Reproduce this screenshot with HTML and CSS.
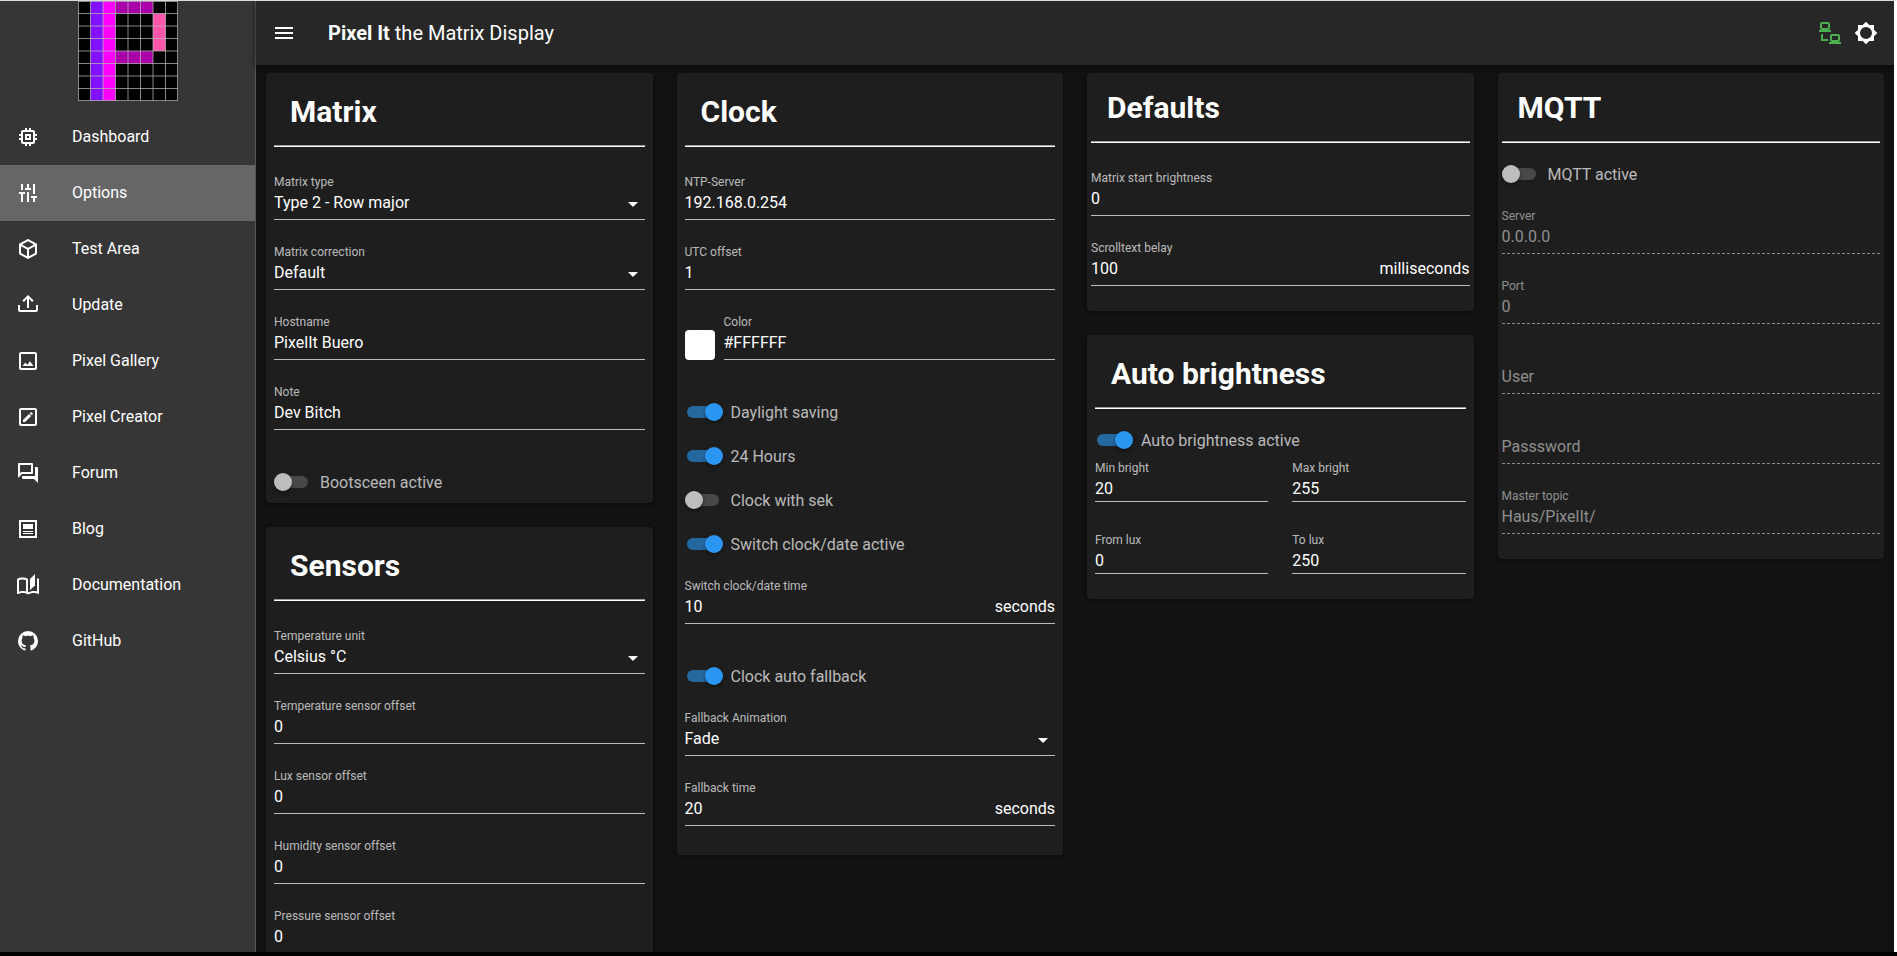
FILE: index.html
```
<!DOCTYPE html>
<html lang="en">
<head>
<meta charset="utf-8">
<meta name="viewport" content="width=device-width, initial-scale=1">
<title>Pixel It the Matrix Display</title>
<link rel="stylesheet" href="styles.css">
</head>
<body>
<div class="app">
  <aside class="sidebar">
    <svg class="logo" viewBox="0 0 100 100" role="img" aria-label="Pixel It">
      <rect width="100" height="100" fill="#000"/>
      <rect x="12.5" width="12.5" height="100" fill="#8010ff"/>
      <rect x="25" width="12.5" height="100" fill="#ff00ff"/>
      <rect x="37.5" width="37.5" height="12.5" fill="#aa00aa"/>
      <rect x="37.5" y="50" width="37.5" height="12.5" fill="#aa00aa"/>
      <rect x="75" y="12.5" width="12.5" height="37.5" fill="#ff55aa"/>
      <path d="M.5 0V100M12.5 0V100M25 0V100M37.5 0V100M50 0V100M62.5 0V100M75 0V100M87.5 0V100M99.5 0V100M0 .5H100M0 12.5H100M0 25H100M0 37.5H100M0 50H100M0 62.5H100M0 75H100M0 87.5H100M0 99.5H100" stroke="#b4b4b4" stroke-opacity=".75" fill="none"/>
    </svg>
    <nav class="nav">
      <a class="nav-item" href="#dashboard"><svg class="icon" viewBox="0 0 24 24"><path d="M17,17H7V7H17M21,11V9H19V7C19,5.89 18.1,5 17,5H15V3H13V5H11V3H9V5H7C5.89,5 5,5.89 5,7V9H3V11H5V13H3V15H5V17A2,2 0 0,0 7,19H9V21H11V19H13V21H15V19H17A2,2 0 0,0 19,17V15H21V13H19V11M13,13H11V11H13M15,9H9V15H15V9Z"/></svg>Dashboard</a>
      <a class="nav-item nav-item--active" href="#options" aria-current="page"><svg class="icon" viewBox="0 0 24 24"><path d="M5,3H7V9H5ZM3,11H9V13H7V21H5V13H3ZM11,3H13V7H15V9H9V7H11ZM11,11H13V21H11ZM17,3H19V13H17ZM15,15H21V17H19V21H17V17H15Z"/></svg>Options</a>
      <a class="nav-item" href="#test"><svg class="icon" viewBox="0 0 24 24"><path d="M21,16.5C21,16.88 20.79,17.21 20.47,17.38L12.57,21.82C12.41,21.94 12.21,22 12,22C11.79,22 11.59,21.94 11.43,21.82L3.53,17.38C3.21,17.21 3,16.88 3,16.5V7.5C3,7.12 3.21,6.79 3.53,6.62L11.43,2.18C11.59,2.06 11.79,2 12,2C12.21,2 12.41,2.06 12.57,2.18L20.47,6.62C20.79,6.79 21,7.12 21,7.5V16.5M12,4.15L6.04,7.5L12,10.85L17.96,7.5L12,4.15M5,15.91L11,19.29V12.58L5,9.21V15.91M19,15.91V9.21L13,12.58V19.29L19,15.91Z"/></svg>Test Area</a>
      <a class="nav-item" href="#update"><svg class="icon" viewBox="0 0 24 24"><path d="M2 12H4V17H20V12H22V17C22 18.11 21.11 19 20 19H4C2.9 19 2 18.11 2 17V12M12 2L6.46 7.46L7.88 8.88L11 5.75V15H13V5.75L16.13 8.88L17.55 7.45L12 2Z"/></svg>Update</a>
      <a class="nav-item" href="#gallery"><svg class="icon" viewBox="0 0 24 24"><path d="M19,19H5V5H19M19,3H5A2,2 0 0,0 3,5V19A2,2 0 0,0 5,21H19A2,2 0 0,0 21,19V5A2,2 0 0,0 19,3M13.96,12.29L11.21,15.83L9.25,13.47L6.5,17H17.5L13.96,12.29Z"/></svg>Pixel Gallery</a>
      <a class="nav-item" href="#creator"><svg class="icon" viewBox="0 0 24 24"><path d="M19,19V5H5V19H19M19,3A2,2 0 0,1 21,5V19A2,2 0 0,1 19,21H5A2,2 0 0,1 3,19V5C3,3.89 3.9,3 5,3H19M16.7,9.35L15.7,10.35L13.65,8.3L14.65,7.3C14.86,7.08 15.21,7.08 15.42,7.3L16.7,8.58C16.92,8.79 16.92,9.14 16.7,9.35M7,14.94L13.06,8.88L15.12,10.94L9.06,17H7V14.94Z"/></svg>Pixel Creator</a>
      <a class="nav-item" href="#forum"><svg class="icon" viewBox="0 0 24 24"><path d="M15,4V11H5.17L4,12.17V4H15M16,2H3A1,1 0 0,0 2,3V17L6,13H16A1,1 0 0,0 17,12V3A1,1 0 0,0 16,2M21,6H19V15H6V17A1,1 0 0,0 7,18H18L22,22V7A1,1 0 0,0 21,6Z"/></svg>Forum</a>
      <a class="nav-item" href="#blog"><svg class="icon" viewBox="0 0 24 24"><path d="M19 5V19H5V5H19M21 3H3V21H21V3M17 17H7V16H17V17M17 15H7V14H17V15M17 12H7V7H17V12Z"/></svg>Blog</a>
      <a class="nav-item" href="#docs"><svg class="icon" viewBox="0 0 24 24"><path d="M19 1L14 6V17L19 12.5V1M21 5V18.5C19.9 18.15 18.7 18 17.5 18C15.8 18 13.35 18.65 12 19.5V6C10.55 4.9 8.45 4.5 6.5 4.5C4.55 4.5 2.45 4.9 1 6V20.65C1 20.9 1.25 21.15 1.5 21.15C1.6 21.15 1.65 21.1 1.75 21.1C3.1 20.45 5.05 20 6.5 20C8.45 20 10.55 20.4 12 21.5C13.35 20.65 15.8 20 17.5 20C19.15 20 20.85 20.3 22.25 21.05C22.35 21.1 22.4 21.1 22.5 21.1C22.75 21.1 23 20.85 23 20.6V6C22.4 5.55 21.75 5.25 21 5M10 18.41C8.75 18.09 7.5 18 6.5 18C5.44 18 4.18 18.19 3 18.5V7.13C3.91 6.73 5.14 6.5 6.5 6.5C7.86 6.5 9.09 6.73 10 7.13V18.41Z"/></svg>Documentation</a>
      <a class="nav-item" href="#github"><svg class="icon" viewBox="0 0 24 24"><path d="M12,2A10,10 0 0,0 2,12C2,16.42 4.87,20.17 8.84,21.5C9.34,21.58 9.5,21.27 9.5,21C9.5,20.77 9.5,20.14 9.5,19.31C6.73,19.91 6.14,17.97 6.14,17.97C5.68,16.81 5.03,16.5 5.03,16.5C4.12,15.88 5.1,15.9 5.1,15.9C6.1,15.97 6.63,16.93 6.63,16.93C7.5,18.45 8.97,18 9.54,17.76C9.63,17.11 9.89,16.67 10.17,16.42C7.95,16.17 5.62,15.31 5.62,11.5C5.62,10.39 6,9.5 6.65,8.79C6.55,8.54 6.2,7.5 6.75,6.15C6.75,6.15 7.59,5.88 9.5,7.17C10.29,6.95 11.15,6.84 12,6.84C12.85,6.84 13.71,6.95 14.5,7.17C16.41,5.88 17.25,6.15 17.25,6.15C17.8,7.5 17.45,8.54 17.35,8.79C18,9.5 18.38,10.39 18.38,11.5C18.38,15.32 16.04,16.16 13.81,16.41C14.17,16.72 14.5,17.33 14.5,18.26C14.5,19.6 14.5,20.68 14.5,21C14.5,21.27 14.66,21.59 15.17,21.5C19.14,20.16 22,16.42 22,12A10,10 0 0,0 12,2Z"/></svg>GitHub</a>
    </nav>
  </aside>

  <div class="page">
    <header class="topbar">
      <button class="icon-button" type="button" aria-label="Menu"><svg class="icon" viewBox="0 0 24 24"><path d="M3,6H21V8H3V6M3,11H21V13H3V11M3,16H21V18H3V16Z"/></svg></button>
      <h1 class="topbar-title"><b>Pixel It</b> the Matrix Display</h1>
      <svg class="icon icon--online" viewBox="0 0 24 24" role="img" aria-label="Connected"><path d="M4,1C2.89,1 2,1.89 2,3V7C2,8.11 2.89,9 4,9H1V11H13V9H10C11.11,9 12,8.11 12,7V3C12,1.89 11.11,1 10,1H4M4,3H10V7H4V3M3,13V18L3,20H10V18H5V13H3M14,13C12.89,13 12,13.89 12,15V19C12,20.11 12.89,21 14,21H11V23H23V21H20C21.11,21 22,20.11 22,19V15C22,13.89 21.11,13 20,13H14M14,15H20V19H14V15Z"/></svg>
      <button class="icon-button" type="button" aria-label="Toggle theme"><svg class="icon" viewBox="0 0 24 24"><path d="M12,18A6,6 0 0,1 6,12A6,6 0 0,1 12,6A6,6 0 0,1 18,12A6,6 0 0,1 12,18M20,15.31L23.31,12L20,8.69V4H15.31L12,0.69L8.69,4H4V8.69L0.69,12L4,15.31V20H8.69L12,23.31L15.31,20H20V15.31Z"/></svg></button>
    </header>

    <main class="columns">
      <div class="column">
        <section class="card">
          <h2 class="card-title">Matrix</h2>
          <hr class="rule">
          <div class="fields">
            <div class="field"><label for="mtype">Matrix type</label><select id="mtype"><option>Type 2 - Row major</option></select><svg class="caret" viewBox="0 0 24 24"><path d="M7,10L12,15L17,10H7Z"/></svg></div>
            <div class="field"><label for="mcorr">Matrix correction</label><select id="mcorr"><option>Default</option></select><svg class="caret" viewBox="0 0 24 24"><path d="M7,10L12,15L17,10H7Z"/></svg></div>
            <div class="field"><label for="host">Hostname</label><input id="host" type="text" value="PixelIt Buero"></div>
            <div class="field"><label for="note">Note</label><input id="note" type="text" value="Dev Bitch"></div>
          </div>
          <div class="switches switches--spaced"><label class="switch"><input type="checkbox" role="switch"><span>Bootsceen active</span></label></div>
        </section>

        <section class="card">
          <h2 class="card-title">Sensors</h2>
          <hr class="rule">
          <div class="fields">
            <div class="field"><label for="tunit">Temperature unit</label><select id="tunit"><option>Celsius °C</option></select><svg class="caret" viewBox="0 0 24 24"><path d="M7,10L12,15L17,10H7Z"/></svg></div>
            <div class="field"><label for="toff">Temperature sensor offset</label><input id="toff" type="text" inputmode="decimal" value="0"></div>
            <div class="field"><label for="loff">Lux sensor offset</label><input id="loff" type="text" inputmode="decimal" value="0"></div>
            <div class="field"><label for="hoff">Humidity sensor offset</label><input id="hoff" type="text" inputmode="decimal" value="0"></div>
            <div class="field"><label for="poff">Pressure sensor offset</label><input id="poff" type="text" inputmode="decimal" value="0"></div>
          </div>
        </section>
      </div>

      <div class="column">
        <section class="card card--tall-end">
          <h2 class="card-title">Clock</h2>
          <hr class="rule">
          <div class="fields">
            <div class="field"><label for="ntp">NTP-Server</label><input id="ntp" type="text" value="192.168.0.254"></div>
            <div class="field"><label for="utc">UTC offset</label><input id="utc" type="text" inputmode="numeric" value="1"></div>
            <div class="color-row">
              <button class="swatch" type="button" aria-label="Pick color"></button>
              <div class="field"><label for="color">Color</label><input id="color" type="text" value="#FFFFFF"></div>
            </div>
          </div>
          <div class="switches switches--spaced">
            <label class="switch"><input type="checkbox" role="switch" checked><span>Daylight saving</span></label>
            <label class="switch"><input type="checkbox" role="switch" checked><span>24 Hours</span></label>
            <label class="switch"><input type="checkbox" role="switch"><span>Clock with sek</span></label>
            <label class="switch"><input type="checkbox" role="switch" checked><span>Switch clock/date active</span></label>
          </div>
          <div class="fields fields--follow">
            <div class="field field--unit"><label for="swtime">Switch clock/date time</label><input id="swtime" type="text" inputmode="numeric" value="10"><span class="unit">seconds</span></div>
          </div>
          <div class="switches switches--spaced"><label class="switch"><input type="checkbox" role="switch" checked><span>Clock auto fallback</span></label></div>
          <div class="fields fields--follow">
            <div class="field"><label for="fanim">Fallback Animation</label><select id="fanim"><option>Fade</option></select><svg class="caret" viewBox="0 0 24 24"><path d="M7,10L12,15L17,10H7Z"/></svg></div>
            <div class="field field--unit"><label for="ftime">Fallback time</label><input id="ftime" type="text" inputmode="numeric" value="20"><span class="unit">seconds</span></div>
          </div>
        </section>
      </div>

      <div class="column">
        <section class="card card--slim">
          <h2 class="card-title">Defaults</h2>
          <hr class="rule">
          <div class="fields">
            <div class="field"><label for="bright">Matrix start brightness</label><input id="bright" type="text" inputmode="numeric" value="0"></div>
            <div class="field field--unit"><label for="scroll">Scrolltext belay</label><input id="scroll" type="text" inputmode="numeric" value="100"><span class="unit">milliseconds</span></div>
          </div>
        </section>

        <section class="card card--mid-end">
          <h2 class="card-title">Auto brightness</h2>
          <hr class="rule">
          <div class="switches"><label class="switch"><input type="checkbox" role="switch" checked><span>Auto brightness active</span></label></div>
          <div class="pairs">
            <div class="field field--short"><label for="minb">Min bright</label><input id="minb" type="text" inputmode="numeric" value="20"></div>
            <div class="field field--short"><label for="maxb">Max bright</label><input id="maxb" type="text" inputmode="numeric" value="255"></div>
            <div class="field field--short"><label for="froml">From lux</label><input id="froml" type="text" inputmode="numeric" value="0"></div>
            <div class="field field--short"><label for="tol">To lux</label><input id="tol" type="text" inputmode="numeric" value="250"></div>
          </div>
        </section>
      </div>

      <div class="column">
        <section class="card card--slim">
          <h2 class="card-title">MQTT</h2>
          <hr class="rule">
          <div class="switches"><label class="switch"><input type="checkbox" role="switch"><span>MQTT active</span></label></div>
          <div class="fields fields--follow">
            <div class="field field--off"><label for="server">Server</label><input id="server" type="text" value="0.0.0.0" disabled></div>
            <div class="field field--off"><label for="port">Port</label><input id="port" type="text" value="0" disabled></div>
            <div class="field field--off field--empty"><label for="user">User</label><input id="user" type="text" disabled></div>
            <div class="field field--off field--empty"><label for="pass">Passsword</label><input id="pass" type="password" disabled></div>
            <div class="field field--off"><label for="topic">Master topic</label><input id="topic" type="text" value="Haus/PixelIt/" disabled></div>
          </div>
        </section>
      </div>
    </main>
  </div>
</div>
</body>
</html>
```
FILE: styles.css
```
*, *::before, *::after { box-sizing: border-box; }

body {
  margin: 0;
  background: #000;
  color: #fff;
  font: 16px/24px Roboto, sans-serif;
}

.app {
  display: flex;
  height: calc(100vh - 4px);
  overflow: hidden;
  background: #121212;
  border-top: 1px solid #d9dbda;
  border-right: 3px solid #fff;
}

.icon {
  flex: none;
  display: block;
  width: 24px;
  height: 24px;
  fill: #fff;
}
.icon--online { fill: #4caf50; }

/* Sidebar */
.sidebar {
  flex: none;
  display: flex;
  flex-direction: column;
  gap: 8px;
  width: 256px;
  background: #363636;
  border-right: 1px solid #565656;
}
.logo { display: block; width: 100px; height: 100px; margin: 0 auto; }
.nav { display: flex; flex-direction: column; }
.nav-item {
  display: flex;
  align-items: center;
  gap: 32px;
  height: 56px;
  padding: 0 16px;
  color: #fff;
  text-decoration: none;
}
.nav-item--active { background: #666; }

/* Top bar */
.page {
  flex: 1;
  min-width: 0;
  display: flex;
  flex-direction: column;
}
.topbar {
  flex: none;
  display: flex;
  align-items: center;
  gap: 12px;
  height: 64px;
  padding: 0 16px;
  background: #272727;
  box-shadow: 0 2px 8px rgba(0, 0, 0, .5);
}
.topbar-title {
  flex: 1;
  margin: 0;
  padding-left: 20px;
  font-size: 20px;
  font-weight: 400;
}
.icon-button {
  padding: 0;
  border: 0;
  background: none;
  cursor: pointer;
}

/* Cards */
.columns {
  display: grid;
  grid-template-columns: repeat(4, minmax(0, 1fr));
  gap: 24px;
  align-items: start;
  min-height: 0;
  padding: 8px 10px;
}
.column { display: flex; flex-direction: column; gap: 24px; }
.card {
  padding: 8px 8px 9px;
  background: #1e1e1e;
  border-radius: 4px;
  box-shadow: 0 2px 4px rgba(0, 0, 0, .35);
}
.card--slim { padding: 4px 4px 25px; }
.card--mid-end { padding-bottom: 25px; }
.card--tall-end { padding-bottom: 29px; }
.card-title {
  margin: 0;
  padding: 15px 16px 17px;
  font-size: 30px;
  line-height: 32px;
  font-weight: 700;
}
.rule {
  margin: 0;
  border: 0;
  border-top: 1px solid #9c9c9c;
  border-bottom: 1px solid #fff;
}

/* Fields */
.fields {
  display: flex;
  flex-direction: column;
  gap: 22px;
  padding-top: 25px;
}
.fields--follow { padding-top: 20px; }
.field {
  display: grid;
  grid-template-columns: minmax(0, 1fr);
  grid-template-rows: 20px auto;
}
.field label {
  grid-area: 1 / 1;
  color: rgba(255, 255, 255, .7);
  font-size: 12px;
  line-height: 20px;
}
.field input,
.field select {
  grid-area: 2 / 1;
  appearance: none;
  width: 100%;
  height: 28px;
  margin: 0;
  padding: 0 0 7px;
  border: 0;
  border-bottom: 1px solid #bcbcbc;
  border-radius: 0;
  outline: 0;
  background: none;
  color: #fff;
  font: inherit;
  line-height: 20px;
}
.field select { padding: 1px 0 6px; }
.field option { background: #1e1e1e; }
.caret {
  grid-area: 2 / 1;
  justify-self: end;
  width: 24px;
  height: 24px;
  fill: #fff;
  pointer-events: none;
}
.unit {
  grid-area: 2 / 1;
  justify-self: end;
  line-height: 22px;
  pointer-events: none;
}
.field--short input { height: 24px; padding-bottom: 3px; }
.field--off label,
.field--off input { color: rgba(255, 255, 255, .5); }
.field--off input { border-bottom: 1px dashed #8a8a8a; }
.field--empty label {
  grid-area: 2 / 1;
  font-size: 16px;
  line-height: 22px;
}
.color-row { display: grid; grid-template-columns: 30px 1fr; gap: 9px; align-items: end; }
.swatch {
  height: 30px;
  padding: 0;
  border: 0;
  border-radius: 4px;
  background: #fff;
  cursor: pointer;
}
.pairs {
  display: grid;
  grid-template-columns: 1fr 1fr;
  gap: 28px 24px;
  padding-top: 6px;
}

/* Switches */
.switches {
  display: flex;
  flex-direction: column;
  gap: 20px;
  padding-top: 19px;
}
.switches--spaced { padding: 40px 0 0; }
.switch {
  display: flex;
  align-items: center;
  gap: 8px;
  height: 24px;
  color: rgba(255, 255, 255, .7);
}
.switch span { padding-top: 2px; }
.switch input {
  position: relative;
  appearance: none;
  flex: none;
  width: 38px;
  height: 24px;
  margin: 0;
}
.switch input::before,
.switch input::after {
  content: "";
  position: absolute;
}
.switch input::before {
  top: 6px;
  left: 0;
  width: 34px;
  height: 12px;
  border-radius: 6px;
  background: #484848;
}
.switch input::after {
  top: 3px;
  left: 0;
  width: 18px;
  height: 18px;
  border-radius: 50%;
  background: #bdbdbd;
  box-shadow: 0 2px 4px rgba(0, 0, 0, .4);
}
.switch input:checked::before { left: 2px; background: #25689f; }
.switch input:checked::after { left: 20px; background: #2b96f1; }
```
